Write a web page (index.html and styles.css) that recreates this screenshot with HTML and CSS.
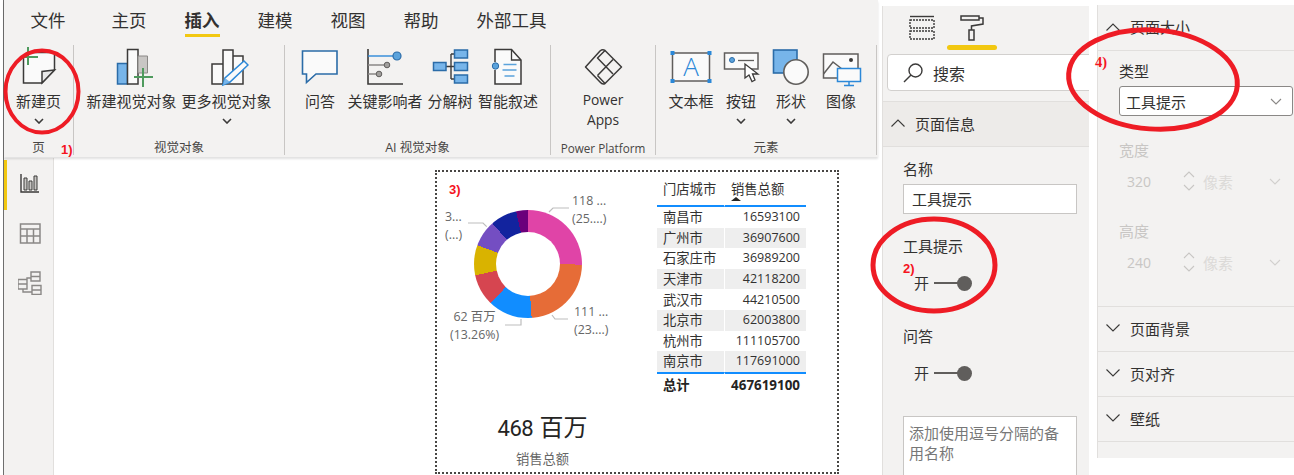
FILE: index.html
```html
<!DOCTYPE html>
<html lang="zh-CN">
<head>
<meta charset="utf-8">
<title>Power BI Desktop</title>
<link rel="stylesheet" href="styles.css">
</head>
<body>
<div class="app">
  <div class="workspace">
    <header class="ribbon">
      <nav class="tabs">
        <span class="tab tab-file">文件</span>
        <span class="tab">主页</span>
        <span class="tab active">插入</span>
        <span class="tab">建模</span>
        <span class="tab">视图</span>
        <span class="tab">帮助</span>
        <span class="tab">外部工具</span>
      </nav>
      <div class="groups">
        <section class="group g-page">
          <div class="btns">
            <div class="btn w-68">
              <svg class="ico" viewBox="16 45 44 42"><path fill="#fafafa" stroke="#3b3a39" stroke-width="1.5" d="M22.5 58V83H41L53.5 70V52.5H32"/><path fill="#e8e8e8" stroke="#3b3a39" stroke-width="1.5" d="M41 83V71.5L53.5 70Z"/><path stroke="#4e9a5d" stroke-width="2" fill="none" d="M27 47V65M21 57H37"/></svg>
              <span class="lbl">新建页</span>
              <svg class="chev" viewBox="0 0 10 6"><path d="M1 1L5 5L9 1"/></svg>
            </div>
          </div>
          <span class="gname">页</span>
        </section>
        <section class="group g-visual">
          <div class="btns">
            <div class="btn w-95">
              <svg class="ico" viewBox="109 45 44 42"><rect x="116.5" y="63.5" width="10" height="20.5" fill="#77b5ea" stroke="#2b6ca8" stroke-width="1.5"/><rect x="126.5" y="49.5" width="10.5" height="34.5" fill="#fafafa" stroke="#3b3a39" stroke-width="1.5"/><path fill="#c8c6c4" stroke="#8a8886" d="M137 56H146.5V73H137Z"/><path stroke="#4e9a5d" stroke-width="2" fill="none" d="M142 68V87M133 77H152"/></svg>
              <span class="lbl">新建视觉对象</span>
            </div>
            <div class="btn w-95">
              <svg class="ico" viewBox="204 45 44 42"><path fill="#fafafa" stroke="#3b3a39" stroke-width="1.5" d="M211 64H222V50H232V56H242V84H211Z M222 64V84 M232 56V74"/><path fill="#fafafa" stroke="#2b88d8" stroke-width="1.5" d="M243 61L247 65L229 82L222 85L224 78Z"/><path fill="#77b5ea" d="M222 85L224 78L229 82Z"/></svg>
              <span class="lbl">更多视觉对象</span>
              <svg class="chev" viewBox="0 0 10 6"><path d="M1 1L5 5L9 1"/></svg>
            </div>
          </div>
          <span class="gname">视觉对象</span>
        </section>
        <section class="group g-ai">
          <div class="btns">
            <div class="btn w-56">
              <svg class="ico" viewBox="298 45 44 42"><path fill="#fafafa" stroke="#2b6ca8" stroke-width="1.6" d="M302.5 51H337V74H316L306.5 82.5V74H302.5Z"/></svg>
              <span class="lbl">问答</span>
            </div>
            <div class="btn w-74">
              <svg class="ico" viewBox="363 45 44 42"><path fill="none" stroke="#3b3a39" stroke-width="1.6" d="M368 49V84H403"/><path stroke="#2b88d8" stroke-width="1.4" d="M368 56H393"/><path stroke="#8a8886" stroke-width="1.4" d="M368 65H384M368 74H376"/><circle cx="397" cy="56" r="4" fill="#5ba3dc" stroke="#2b6ca8" stroke-width="1.2"/><circle cx="387" cy="65" r="2.8" fill="#a19f9d" stroke="#605e5c"/><circle cx="379" cy="74" r="2.8" fill="#a19f9d" stroke="#605e5c"/></svg>
              <span class="lbl">关键影响者</span>
            </div>
            <div class="btn w-56">
              <svg class="ico" viewBox="428 45 44 42"><path fill="none" stroke="#3b3a39" stroke-width="1.4" d="M446 66.5H454M451 54V79M451 54H454M451 79H454"/><g fill="#77b5ea" stroke="#2b6ca8" stroke-width="1.5"><rect x="433.5" y="62.5" width="12.5" height="8"/><rect x="454.5" y="50" width="13" height="8"/><rect x="454.5" y="62.5" width="13" height="8"/><rect x="454.5" y="75" width="13" height="8"/></g></svg>
              <span class="lbl">分解树</span>
            </div>
            <div class="btn w-60">
              <svg class="ico" viewBox="485.5 45 44 42"><path fill="#fafafa" stroke="#3b3a39" stroke-width="1.5" d="M494.5 62V49.5H511L520.5 60V84H494.5V70"/><path fill="none" stroke="#3b3a39" stroke-width="1.3" d="M511 49.5V60H520.5"/><circle cx="495" cy="66" r="3.2" fill="#5ba3dc" stroke="#2b6ca8"/><path stroke="#5ba3dc" stroke-width="1.4" d="M503 64.5H516M502 70H516M504 76H514"/></svg>
              <span class="lbl">智能叙述</span>
            </div>
          </div>
          <span class="gname">AI 视觉对象</span>
        </section>
        <section class="group g-pp">
          <div class="btns">
            <div class="btn w-fill">
              <svg class="ico" viewBox="581 45 44 42"><g fill="none" stroke="#3b3a39" stroke-width="1.5" stroke-linejoin="round"><path d="M600 51L585.5 67L600 82Q602.500 85 605 83.500L621.500 67L605 50.500Q602.500 49 600 51Z"/><path d="M605 50.500L597.500 58L613 74M597.500 75.500L613 59.500M597.500 75.500L605 83.500"/></g></svg>
              <span class="lbl lbl-latin">Power<br>Apps</span>
            </div>
          </div>
          <span class="gname">Power Platform</span>
        </section>
        <section class="group g-el">
          <div class="btns">
            <div class="btn w-50">
              <svg class="ico" viewBox="669 45 44 42"><rect x="672.5" y="53" width="37" height="28" fill="#fafafa" stroke="#605e5c" stroke-width="1.5"/><g fill="#2b88d8"><rect x="670.5" y="51" width="4" height="4"/><rect x="707.5" y="51" width="4" height="4"/><rect x="670.5" y="79" width="4" height="4"/><rect x="707.5" y="79" width="4" height="4"/></g><text x="691" y="76" class="ico-a">A</text></svg>
              <span class="lbl">文本框</span>
            </div>
            <div class="btn w-50">
              <svg class="ico" viewBox="719 45 44 42"><rect x="724.5" y="53" width="33.5" height="16" fill="#fafafa" stroke="#605e5c" stroke-width="1.5"/><circle cx="732" cy="60" r="2.5" fill="#5ba3dc" stroke="#2b6ca8"/><path stroke="#605e5c" stroke-width="1.3" d="M738 60.5H754"/><path fill="#fff" stroke="#3b3a39" stroke-width="1.3" d="M745 64V78L749 75L752 81.5L755 80L752.5 74H758Z"/></svg>
              <span class="lbl">按钮</span>
              <svg class="chev" viewBox="0 0 10 6"><path d="M1 1L5 5L9 1"/></svg>
            </div>
            <div class="btn w-50">
              <svg class="ico" viewBox="769 45 44 42"><rect x="773.5" y="50" width="23.5" height="23" fill="#77b5ea" stroke="#2b6ca8" stroke-width="1.6"/><circle cx="796" cy="72" r="12.2" fill="#fafafa" stroke="#605e5c" stroke-width="1.6"/></svg>
              <span class="lbl">形状</span>
              <svg class="chev" viewBox="0 0 10 6"><path d="M1 1L5 5L9 1"/></svg>
            </div>
            <div class="btn w-50">
              <svg class="ico" viewBox="819 45 44 42"><path fill="#fafafa" stroke="#605e5c" stroke-width="1.5" d="M837 78H823.5V54H858V68"/><path fill="none" stroke="#605e5c" stroke-width="1.5" d="M823.5 74L833 62L842 69"/><circle cx="851" cy="60" r="2" fill="#3b3a39"/><rect x="837.5" y="68.5" width="23" height="13" fill="#fafafa" stroke="#2b88d8" stroke-width="1.5"/><path stroke="#2b88d8" stroke-width="1.5" d="M849 82V85M844 85.5H854"/></svg>
              <span class="lbl">图像</span>
            </div>
          </div>
          <span class="gname">元素</span>
        </section>
      </div>
    </header>
    <div class="main">
      <aside class="rail">
        <div class="rail-item current">
          <svg class="rail-ico" viewBox="0 0 24 24"><path fill="none" stroke="#3b3a39" stroke-width="1.4" d="M3 3V21H21"/><path fill="#c8c6c4" stroke="#3b3a39" d="M6 7H9V19H6ZM11 10H14V19H11ZM16 5H19V19H16Z"/></svg>
        </div>
        <div class="rail-item">
          <svg class="rail-ico" viewBox="0 0 24 24"><path fill="none" stroke="#8a8886" stroke-width="1.5" d="M2.5 3H22V22H2.500ZM2.500 8H22M2.500 15H22M9 8V22M15.500 8V22"/></svg>
        </div>
        <div class="rail-item">
          <svg class="rail-ico" viewBox="0 0 24 24"><path fill="none" stroke="#8a8886" stroke-width="1.4" d="M0 8.5H9V18H0ZM0 13H9M13 1H22V10H13ZM13 5.500H22M14 14.500H23V23.500H14ZM14 19H23M9 8.500V7H13M5 18V21H14"/></svg>
        </div>
      </aside>
      <div class="canvas">
        <div class="visual">
          <div class="left-col">
            <div class="chart">
              <div class="donut"></div>
              <svg class="leaders" viewBox="437 172 220 232"><path d="M549 212L553 208H569M486.700 226.700L483 223H468M552 315L555 319H568M521 319V325H505"/></svg>
              <div class="dlabel d-118">118 ...<br>(25....)</div>
              <div class="dlabel d-3">3...<br>(...)</div>
              <div class="dlabel d-111">111 ...<br>(23....)</div>
              <div class="dlabel d-62">62 百万<br>(13.26%)</div>
            </div>
            <div class="card">
              <div class="card-value"><span class="card-num">468</span> 百万</div>
              <div class="card-label">销售总额</div>
            </div>
          </div>
          <table class="grid">
            <thead>
              <tr><th>门店城市</th><th class="sorted">销售总额</th></tr>
            </thead>
            <tbody>
              <tr><td>南昌市</td><td class="n">16593100</td></tr>
              <tr><td>广州市</td><td class="n">36907600</td></tr>
              <tr><td>石家庄市</td><td class="n">36989200</td></tr>
              <tr><td>天津市</td><td class="n">42118200</td></tr>
              <tr><td>武汉市</td><td class="n">44210500</td></tr>
              <tr><td>北京市</td><td class="n">62003800</td></tr>
              <tr><td>杭州市</td><td class="n">111105700</td></tr>
              <tr><td>南京市</td><td class="n">117691000</td></tr>
            </tbody>
            <tfoot>
              <tr><td>总计</td><td class="n">467619100</td></tr>
            </tfoot>
          </table>
        </div>
      </div>
    </div>
  </div>

  <aside class="pane pane-a">
    <div class="ptabs">
      <div class="ptab">
        <svg class="ptab-ico" viewBox="0 0 26 26"><path fill="none" stroke="#3b3a39" stroke-width="1.4" d="M1 1.500H25"/><path fill="none" stroke="#3b3a39" stroke-width="1.4" stroke-dasharray="2 1" d="M1 5H25V13H1ZM1 16H25V24H1Z"/></svg>
      </div>
      <div class="ptab active">
        <svg class="ptab-ico" viewBox="0 0 26 26"><path fill="none" stroke="#3b3a39" stroke-width="1.5" d="M2 1H20V5H2ZM20 3H24V9L12.500 11V15M10 15H15V25H10Z"/></svg>
      </div>
    </div>
    <div class="search">
      <svg class="search-ico" viewBox="0 0 20 20"><circle cx="12.500" cy="7.500" r="6.500" fill="none" stroke="#3b3a39" stroke-width="1.4"/><path stroke="#3b3a39" stroke-width="1.4" d="M8 12L1 19"/></svg>
      <span>搜索</span>
    </div>
    <div class="shead open">
      <svg class="caret" viewBox="0 0 14 8"><path d="M0.500 7.500L7 1L13.500 7.500"/></svg>
      <span>页面信息</span>
    </div>
    <div class="pbody">
      <div class="flabel">名称</div>
      <div class="input">工具提示</div>
      <div class="flabel after-input">工具提示</div>
      <div class="toggle"><span>开</span><i class="track"></i><i class="knob"></i></div>
      <div class="flabel after-toggle">问答</div>
      <div class="toggle"><span>开</span><i class="track"></i><i class="knob"></i></div>
      <div class="area">添加使用逗号分隔的备用名称</div>
    </div>
  </aside>

  <aside class="pane pane-b">
    <div class="shead first">
      <svg class="caret" viewBox="0 0 14 8"><path d="M0.500 7.500L7 1L13.500 7.500"/></svg>
      <span>页面大小</span>
    </div>
    <div class="pbody-b">
      <div class="flabel">类型</div>
      <div class="select"><span>工具提示</span><svg class="sel-chev" viewBox="0 0 12 7"><path d="M1 1L6 6L11 1"/></svg></div>
      <div class="flabel off gap-a">宽度</div>
      <div class="num-row">
        <span class="num">320</span>
        <svg class="spin" viewBox="0 0 14 24"><path d="M2 8L7 3L12 8M2 16L7 21L12 16"/></svg>
        <span class="unit">像素</span>
        <svg class="sel-chev dim" viewBox="0 0 12 7"><path d="M1 1L6 6L11 1"/></svg>
      </div>
      <div class="flabel off gap-b">高度</div>
      <div class="num-row">
        <span class="num">240</span>
        <svg class="spin" viewBox="0 0 14 24"><path d="M2 8L7 3L12 8M2 16L7 21L12 16"/></svg>
        <span class="unit">像素</span>
        <svg class="sel-chev dim" viewBox="0 0 12 7"><path d="M1 1L6 6L11 1"/></svg>
      </div>
    </div>
    <div class="shead top-line">
      <svg class="caret" viewBox="0 0 14 8"><path d="M0.500 0.500L7 7L13.500 0.500"/></svg>
      <span>页面背景</span>
    </div>
    <div class="shead">
      <svg class="caret" viewBox="0 0 14 8"><path d="M0.500 0.500L7 7L13.500 0.500"/></svg>
      <span>页对齐</span>
    </div>
    <div class="shead">
      <svg class="caret" viewBox="0 0 14 8"><path d="M0.500 0.500L7 7L13.500 0.500"/></svg>
      <span>壁纸</span>
    </div>
  </aside>

  <svg class="marks" viewBox="0 0 1294 475">
    <ellipse class="thin" cx="42" cy="91.500" rx="36.500" ry="41"/>
    <ellipse cx="934" cy="265" rx="61" ry="46"/>
    <ellipse cx="1153" cy="79.500" rx="84.500" ry="49.500" transform="rotate(4 1153 79.500)"/>
  </svg>
  <span class="note n1">1)</span>
  <span class="note n2">2)</span>
  <span class="note n3">3)</span>
  <span class="note n4">4)</span>
</div>
</body>
</html>
```
FILE: styles.css
```css
* { box-sizing: border-box; }
html, body { margin: 0; padding: 0; background: #fff; }
body {
  font-family: "Open Sans", "Noto Sans CJK SC", sans-serif;
  color: #323130;
  font-size: 15px;
}
.app {
  position: relative;
  display: flex;
  align-items: flex-start;
  width: 1294px;
  height: 475px;
  padding-left: 3px;
  overflow: hidden;
}
.workspace {
  flex: 0 0 875px;
  height: 475px;
  border-left: 1px solid #6e6e6e;
  display: flex;
  flex-direction: column;
}

/* ribbon */
.ribbon {
  flex: 0 0 157px;
  position: relative;
  background: #f3f2f1;
  box-shadow: 0 2px 2px rgba(0, 0, 0, .12);
}
.tabs {
  display: flex;
  gap: 38px;
  height: 45px;
  padding-left: 26.5px;
}
.tab {
  height: 37px;
  padding-top: 8px;
  line-height: 24px;
  font-size: 17.5px;
  white-space: nowrap;
  border-bottom: 3px solid transparent;
}
.tab-file { margin-right: 8px; }
.tab.active { font-weight: 700; border-bottom-color: #f2c811; }
.groups { display: flex; height: 110px; }
.group {
  display: flex;
  flex-direction: column;
  align-items: stretch;
  border-right: 1px solid #c8c6c4;
}
.g-page { width: 70px; }
.g-visual { width: 211px; }
.g-ai { width: 266px; }
.g-pp { width: 105px; }
.g-el { width: 221px; }
.btns { display: flex; flex: none; height: 92px; justify-content: center; }
.g-ai .btns { justify-content: flex-start; padding-left: 7px; }
.g-el .btns { justify-content: flex-start; padding-left: 10px; }
.btn {
  display: flex;
  flex-direction: column;
  align-items: center;
  flex: 0 0 auto;
}
.w-50 { width: 50px; }
.w-56 { width: 56px; }
.w-60 { width: 60px; }
.w-68 { width: 68px; }
.w-74 { width: 74px; }
.w-95 { width: 95px; }
.w-fill { width: 100%; }
.ico { width: 44px; height: 42px; flex: none; }
.ico-a { font: 300 26px "Open Sans", sans-serif; fill: #2b88d8; text-anchor: middle; }
.lbl {
  margin-top: 4px;
  font-size: 15px;
  line-height: 20px;
  white-space: nowrap;
  text-align: center;
}
.lbl-latin { font-size: 13.8px; margin-top: 3px; }
.chev { width: 10px; height: 6px; margin-top: 7px; flex: none; }
.chev path { fill: none; stroke: #3b3a39; stroke-width: 1.6; }
.gname {
  flex: none;
  height: 22px;
  text-align: center;
  font-size: 12.5px;
  line-height: 22px;
  color: #484644;
  white-space: nowrap;
}
.g-pp .gname { font-size: 11.7px; }

/* main */
.main { flex: 1; display: flex; min-height: 0; padding-top: 1px; }
.rail {
  flex: 0 0 50px;
  background: #f3f2f1;
  border-right: 1px solid #e1dfdd;
  padding-top: 2px;
}
.rail-item {
  height: 50px;
  padding: 11px 0 0 11px;
  border-left: 3px solid transparent;
}
.rail-item.current { border-left-color: #f2c811; }
.rail-ico { display: block; width: 24px; height: 24px; }
.canvas { flex: 1; padding: 12px 0 0 381px; min-width: 0; }
.visual {
  width: 404px;
  height: 304px;
  border: 2px dotted #484644;
  display: flex;
  align-items: flex-start;
}
.left-col { flex: 0 0 220px; }
.chart { position: relative; height: 232px; }
.donut {
  position: absolute;
  left: 37px;
  top: 38px;
  width: 108px;
  height: 108px;
  border-radius: 50%;
  background: conic-gradient(
    #e044a7 0 25.17%,
    #e66c37 0 48.93%,
    #118dff 0 62.19%,
    #d64550 0 71.64%,
    #d9b300 0 80.65%,
    #744ec2 0 88.56%,
    #12239e 0 96.45%,
    #6b007b 0 100%);
}
.donut::after {
  content: "";
  position: absolute;
  left: 22px;
  top: 22px;
  width: 64px;
  height: 64px;
  border-radius: 50%;
  background: #fff;
}
.leaders { position: absolute; inset: 0; width: 220px; height: 232px; }
.leaders path { fill: none; stroke: #bdbdbd; stroke-width: 1.2; }
.dlabel {
  position: absolute;
  font-size: 12.4px;
  line-height: 17.5px;
  color: #666;
  white-space: nowrap;
}
.d-118 { left: 135px; top: 20px; }
.d-3 { left: 8px; top: 36px; }
.d-111 { left: 137px; top: 131px; }
.d-62 { left: 13px; top: 136px; text-align: center; }
.card { text-align: center; padding-right: 9px; }
.card-value {
  font-size: 24px;
  line-height: 36px;
  margin-top: 5px;
  color: #252423;
  white-space: nowrap;
}
.card-num { font-family: Roboto, sans-serif; font-size: 22px; letter-spacing: -.5px; }
.card-label {
  margin-top: 2px;
  font-size: 13.3px;
  line-height: 20px;
  color: #666;
}

/* table */
.grid {
  table-layout: fixed;
  width: 149px;
  border-collapse: separate;
  border-spacing: 0;
  font-size: 13.3px;
  color: #323130;
}
.grid th {
  position: relative;
  height: 35px;
  padding: 9px 0 0 6px;
  font-weight: 400;
  line-height: 16px;
  text-align: left;
  vertical-align: top;
  border-bottom: 2px solid #118dff;
  white-space: nowrap;
}
.grid th:first-child { width: 68px; border-right: 1px solid #fff; }
.sorted::after {
  content: "";
  position: absolute;
  left: 6px;
  top: 25px;
  border-left: 5px solid transparent;
  border-right: 5px solid transparent;
  border-bottom: 4px solid #252423;
}
.grid td {
  height: 20.6px;
  padding: 0 6px;
  line-height: 16px;
  white-space: nowrap;
  overflow: hidden;
}
.grid td:first-child { border-right: 1px solid #fff; }
.grid tbody tr:nth-child(even) td { background: #eeeeee; }
.grid tbody tr:nth-child(odd) td { background: #fff; }
.grid .n { text-align: right; font-size: 12.5px; }
.grid tfoot td {
  border-top: 2px solid #118dff;
  height: 24px;
  font-weight: 700;
  color: #252423;
}
.grid tfoot .n { font-size: 13.4px; }

/* panes */
.pane { background: #f3f2f1; flex: none; overflow: hidden; }
.pane-a {
  width: 207px;
  height: 469px;
  margin: 6px 0 0 4px;
  border-left: 1px solid #e1dfdd;
}
.pane-b {
  width: 197px;
  height: 453px;
  margin: 5px 0 0 8px;
  border-left: 1px solid #e1dfdd;
}
.ptabs { display: flex; padding-left: 14px; height: 44px; }
.ptab {
  width: 50px;
  height: 44px;
  display: flex;
  flex-direction: column;
  align-items: center;
  padding-top: 9px;
}
.ptab-ico { width: 26px; height: 26px; flex: none; }
.ptab.active::after {
  content: "";
  width: 50px;
  height: 5px;
  margin-top: 4px;
  background: #f2c811;
  border-radius: 3px;
  flex: none;
}
.search {
  display: flex;
  align-items: center;
  width: 220px;
  height: 37px;
  margin: 4px 0 0 4px;
  padding-left: 15px;
  gap: 10px;
  background: #fff;
  border: 1px solid #d2d0ce;
  border-radius: 4px;
  font-size: 16px;
}
.search-ico { width: 20px; height: 20px; flex: none; }
.shead {
  display: flex;
  align-items: center;
  height: 45px;
  padding: 0 0 2px 8px;
  gap: 10px;
  font-size: 15px;
  border-bottom: 1px solid #e1dfdd;
  white-space: nowrap;
}
.shead.open {
  height: 46px;
  margin-top: 10px;
  background: #edebe9;
  border-top: 1px solid #e1dfdd;
}
.shead.first { height: 46px; }
.shead.top-line { height: 46px; border-top: 1px solid #e1dfdd; }
.caret { width: 14px; height: 8px; flex: none; }
.caret path { fill: none; stroke: #3b3a39; stroke-width: 1.1; }
.pbody { padding: 12px 0 0 20px; }
.flabel { font-size: 15px; line-height: 20px; white-space: nowrap; }
.input {
  width: 174px;
  height: 30px;
  margin-top: 5px;
  padding-left: 8px;
  line-height: 28px;
  background: #fff;
  border: 1px solid #c8c6c4;
}
.after-input { margin-top: 22px; }
.after-toggle { margin-top: 33px; }
.toggle {
  display: flex;
  align-items: center;
  height: 20px;
  margin-top: 17px;
  padding-left: 11px;
  line-height: 20px;
}
.track { width: 24px; height: 2px; margin-left: 5px; background: #605e5c; }
.knob { width: 15px; height: 15px; margin-left: -1px; border-radius: 50%; background: #605e5c; }
.area {
  width: 174px;
  height: 80px;
  margin-top: 33px;
  padding: 6px 5px;
  line-height: 20px;
  color: #777;
  background: #fff;
  border: 1px solid #c8c6c4;
}
.pbody-b { height: 255px; padding: 10px 0 0 21px; }
.select {
  display: flex;
  align-items: center;
  justify-content: space-between;
  width: 174px;
  height: 30px;
  margin-top: 5px;
  padding: 0 10px 0 6px;
  background: #fff;
  border: 1px solid #8a8886;
  border-radius: 3px;
}
.sel-chev { width: 12px; height: 7px; flex: none; }
.sel-chev path { fill: none; stroke: #8a8886; stroke-width: 1.1; }
.sel-chev.dim path { stroke: #d2d0ce; }
.off { color: #c8c6c4; }
.gap-a { margin-top: 24px; }
.gap-b { margin-top: 25px; }
.num-row {
  display: flex;
  align-items: center;
  height: 30px;
  margin-top: 6px;
  color: #c8c6c4;
}
.num { width: 63px; padding-left: 8px; font-size: 14px; }
.spin { width: 14px; height: 24px; flex: none; }
.spin path { fill: none; stroke: #c8c6c4; stroke-width: 1.1; }
.unit { width: 66px; margin-left: 7px; color: #dcdad8; }

/* annotations */
.marks {
  position: absolute;
  left: 0;
  top: 0;
  width: 1294px;
  height: 475px;
  pointer-events: none;
}
.marks ellipse { fill: none; stroke: #ee1c25; stroke-width: 5; }
.marks .thin { stroke-width: 4; }
.note {
  position: absolute;
  font: 700 13px/14px "Liberation Sans", sans-serif;
  color: #f5141e;
}
.n1 { left: 61px; top: 143px; }
.n2 { left: 903px; top: 262px; }
.n3 { left: 449px; top: 183px; }
.n4 { left: 1095px; top: 55px; font-family: "Liberation Serif", serif; font-size: 14.5px; }
```
